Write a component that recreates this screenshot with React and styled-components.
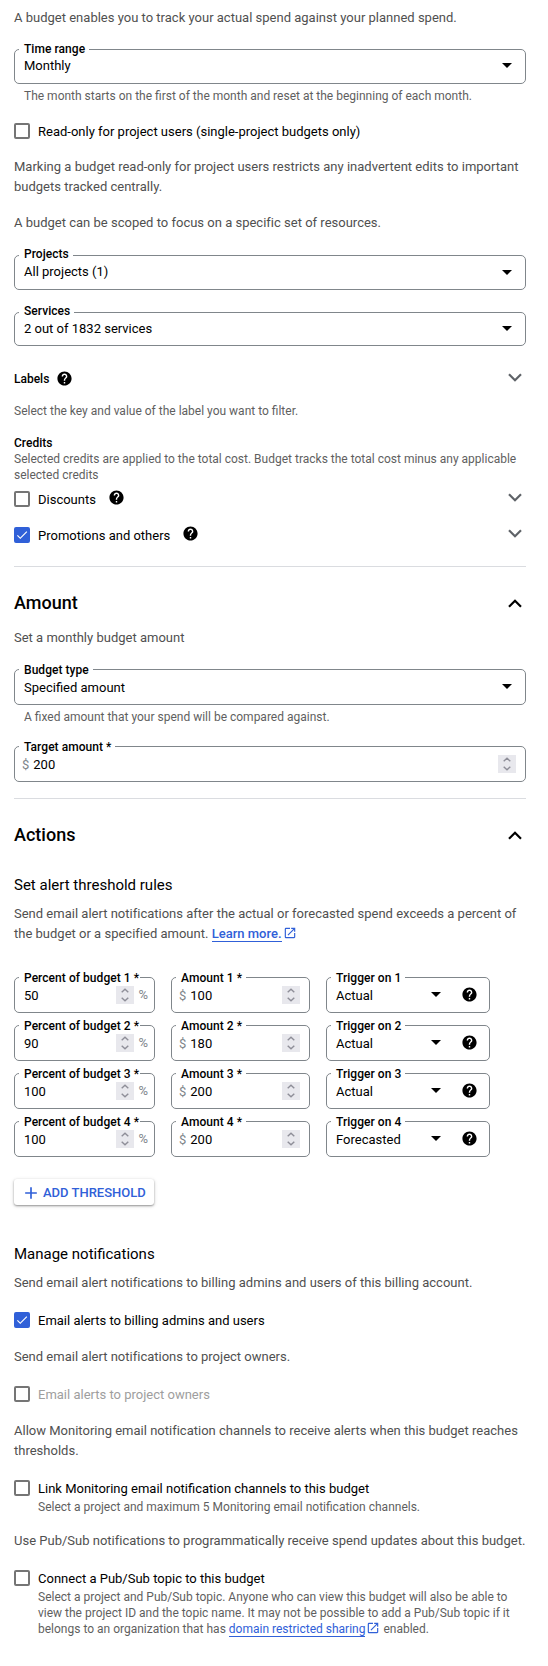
import React from "react";
import styled, { createGlobalStyle, css } from "styled-components";
import { MdHelp, MdOpenInNew, MdAdd, MdCheck } from "react-icons/md";

const GlobalStyle = createGlobalStyle`
  *, *::before, *::after { box-sizing: border-box; }
  body { margin: 0; background: #fff; }
`;

const Page = styled.main`
  width: 548px;
  padding: 7px 22px 28px 14px;
  display: flex;
  flex-direction: column;
  align-items: stretch;
  background: #fff;
  color: #000;
  font-family: Roboto, "Liberation Sans", sans-serif;
  font-size: 13px;
  line-height: 20px;
`;

const Paragraph = styled.p`
  margin: ${(p) => (p.$top || 0) + 1}px 0 -1px;
  color: #505050;
  letter-spacing: 0.005px;
  white-space: nowrap;
`;

const Hint = styled.p`
  margin: ${(p) => p.$top ?? 4}px 0 0 ${(p) => p.$indent || 0}px;
  color: #5f5f5f;
  font-size: 12px;
  line-height: 16px;
  white-space: nowrap;
`;

const SmallTitle = styled.h4`
  margin: ${(p) => p.$top || 0}px 0 0;
  font-size: 12px;
  line-height: 16px;
  font-weight: 500;
`;

const SubTitle = styled.h3`
  margin: ${(p) => p.$top}px 0 6px;
  font-size: 15px;
  line-height: 24px;
  font-weight: 400;
`;

const TitleRow = styled.div`
  display: flex;
  align-items: center;
  height: ${(p) => p.$height || 24}px;
  margin-top: ${(p) => p.$top}px;
  padding-right: 4px;
`;

const SectionTitle = styled.h2`
  margin: 0;
  font-size: 18px;
  line-height: 24px;
  font-weight: 500;
`;

const Divider = styled.hr`
  width: 100%;
  height: 1px;
  margin: ${(p) => p.$top}px 0 0;
  border: 0;
  background: #dadce0;
`;

const FieldBox = styled.div`
  position: relative;
  display: flex;
  align-items: flex-start;
  width: ${(p) => (p.$width ? `${p.$width}px` : "100%")};
  height: ${(p) => p.$height || 36}px;
  margin-top: ${(p) => p.$top || 0}px;
  padding: ${(p) => p.$drop || 7}px 9px 0 ${(p) => p.$inset || 9}px;
  border: 1px solid #80868b;
  border-radius: 5px;
`;

const FieldLabel = styled.label`
  position: absolute;
  left: 4px;
  top: ${(p) => p.$lift || -7}px;
  padding: 0 ${(p) => p.$gap ?? 4}px 0 5px;
  background: #fff;
  font-size: 12px;
  line-height: 14px;
  font-weight: 500;
  letter-spacing: 0.05px;
  white-space: nowrap;
`;

const Value = styled.span`
  flex: 1;
  padding-top: 1px;
  white-space: nowrap;
`;

const Affix = styled.span`
  color: #80868b;
  margin: ${(p) => p.$margin};
`;

const Caret = styled.span`
  margin: ${(p) => p.$down ?? 7}px ${(p) => p.$right ?? 4}px 0 0;
  border: 5px solid transparent;
  border-top-color: #000;
  border-bottom: 0;
`;

const SpinnerBox = styled.span`
  display: flex;
  align-items: center;
  justify-content: center;
  width: 18px;
  height: 18px;
  margin-top: 1px;
  background: #e8e8ed;
`;

const CheckRow = styled.div`
  display: flex;
  align-items: center;
  height: 16px;
  margin-top: ${(p) => p.$top}px;
  padding-right: 4px;
`;

const Box = styled.span`
  display: flex;
  align-items: center;
  justify-content: center;
  flex: none;
  width: 16px;
  height: 16px;
  margin-right: 8px;
  border: 2px solid #757575;
  border-radius: 2px;
  color: #fff;
  ${(p) =>
    p.$checked &&
    css`
      border-color: #3060d8;
      background: #3060d8;
    `}
`;

const Tick = styled(MdCheck)`
  flex: none;
  width: 14px;
  height: 14px;
`;

const CheckLabel = styled.span`
  margin-top: 2px;
  line-height: 16px;
  white-space: nowrap;
  color: ${(p) => (p.$disabled ? "#9e9e9e" : "#000")};
`;

const HelpIcon = styled(MdHelp)`
  flex: none;
  width: 17px;
  height: 17px;
  margin: ${(p) => p.$margin || 0};
`;

const ChevronSvg = styled.svg`
  flex: none;
  margin-left: auto;
  margin-top: ${(p) => p.$shift || 0}px;
`;

const Link = styled.a`
  color: #3060d8;
  border-bottom: 1px solid #3060d8;
  font-weight: ${(p) => (p.$strong ? 500 : 400)};
`;

const LinkIcon = styled(MdOpenInNew)`
  width: 14px;
  height: 14px;
  margin-left: 1px;
  color: #3060d8;
  vertical-align: -2px;
`;

const Rules = styled.div`
  display: flex;
  flex-direction: column;
  gap: 12px;
  margin-top: 34px;
`;

const Rule = styled.div`
  display: flex;
  gap: 16px;
`;

const AddButton = styled.button`
  display: flex;
  align-items: center;
  align-self: flex-start;
  width: 140px;
  height: 26px;
  margin-top: 22px;
  padding: 1px 0 0 7px;
  gap: 2px;
  border: 0;
  border-radius: 3px;
  background: #fff;
  color: #3060d8;
  box-shadow: 0 1px 2px rgba(0, 0, 0, 0.35), 0 1px 4px rgba(0, 0, 0, 0.15);
  font: 500 13px/24px Roboto, sans-serif;
  white-space: nowrap;
`;

function Chevron({ up, shift }) {
  return (
    <ChevronSvg width="14" height="9" viewBox="0 0 14 9" fill="none" stroke={up ? "#000" : "#5f6368"} strokeWidth="2.2" $shift={shift}>
      <path d={up ? "M1 7.8 7 1.8l6 6" : "M1 1.2l6 6 6-6"} />
    </ChevronSvg>
  );
}

function Spinner() {
  return (
    <SpinnerBox>
      <svg width="8" height="14" viewBox="0 0 8 14" fill="none" stroke="#8e8e98" strokeWidth="1.4">
        <path d="M.7 4.3 4 1.2l3.3 3.1M.7 9.7 4 12.8l3.3-3.1" />
      </svg>
    </SpinnerBox>
  );
}

function Check({ top, checked, disabled, label, children }) {
  return (
    <CheckRow $top={top}>
      <Box $checked={checked}>{checked && <Tick />}</Box>
      <CheckLabel $disabled={disabled}>{label}</CheckLabel>
      {children}
    </CheckRow>
  );
}

function Select({ label, value, lift, caretDown, ...box }) {
  return (
    <FieldBox {...box}>
      <FieldLabel $lift={lift}>{label}</FieldLabel>
      <Value>{value}</Value>
      <Caret $down={caretDown} />
    </FieldBox>
  );
}

const rules = [
  ["50", "100", "Actual"],
  ["90", "180", "Actual"],
  ["100", "200", "Actual"],
  ["100", "200", "Forecasted"],
];

export default function App() {
  return (
    <Page>
      <GlobalStyle />
      <Paragraph>A budget enables you to track your actual spend against your planned spend.</Paragraph>
      <Select label="Time range" value="Monthly" $top={22} $height={35} $drop={5} lift={-8} caretDown={8} />
      <Hint $indent={10}>The month starts on the first of the month and reset at the beginning of each month.</Hint>
      <Check top={19} label="Read-only for project users (single-project budgets only)" />
      <Paragraph $top={17}>
        Marking a budget read-only for project users restricts any inadvertent edits to important
        <br />
        budgets tracked centrally.
      </Paragraph>
      <Paragraph $top={16}>A budget can be scoped to focus on a specific set of resources.</Paragraph>
      <Select label="Projects" value="All projects (1)" $top={23} $height={35} $drop={5} lift={-9} caretDown={9} />
      <Select label="Services" value="2 out of 1832 services" $top={22} $height={34} $drop={5} lift={-9} caretDown={8} />

      <TitleRow $top={25} $height={16}>
        <SmallTitle>Labels</SmallTitle>
        <HelpIcon $margin="-2px 0 0 7px" />
        <Chevron shift={-3} />
      </TitleRow>
      <Hint $top={16}>Select the key and value of the label you want to filter.</Hint>
      <SmallTitle $top={16}>Credits</SmallTitle>
      <Hint $top={0}>
        Selected credits are applied to the total cost. Budget tracks the total cost minus any applicable
        <br />
        selected credits
      </Hint>
      <Check top={8} label="Discounts">
        <HelpIcon $margin="-4px 0 0 12px" />
        <Chevron shift={-3} />
      </Check>
      <Check top={20} checked label="Promotions and others">
        <HelpIcon $margin="-4px 0 0 12px" />
        <Chevron shift={-3} />
      </Check>

      <Divider $top={23} />
      <TitleRow $top={24}>
        <SectionTitle>Amount</SectionTitle>
        <Chevron up />
      </TitleRow>
      <Paragraph $top={12}>Set a monthly budget amount</Paragraph>
      <Select label="Budget type" value="Specified amount" $top={22} />
      <Hint $indent={10}>A fixed amount that your spend will be compared against.</Hint>
      <FieldBox $top={21} $inset={7}>
        <FieldLabel>Target amount *</FieldLabel>
        <Affix $margin="1px 4px 0 0">$</Affix>
        <Value>200</Value>
        <Spinner />
      </FieldBox>

      <Divider $top={16} />
      <TitleRow $top={24}>
        <SectionTitle>Actions</SectionTitle>
        <Chevron up />
      </TitleRow>
      <SubTitle $top={26}>Set alert threshold rules</SubTitle>
      <Paragraph>
        Send email alert notifications after the actual or forecasted spend exceeds a percent of
        <br />
        the budget or a specified amount. <Link $strong>Learn more.</Link>
        <LinkIcon />
      </Paragraph>
      <Rules>
        {rules.map(([percent, amount, trigger], i) => (
          <Rule key={i}>
            <FieldBox $width={141}>
              <FieldLabel $gap={1}>Percent of budget {i + 1} *</FieldLabel>
              <Value>{percent}</Value>
              <Spinner />
              <Affix $margin="0 -3px 0 4px">%</Affix>
            </FieldBox>
            <FieldBox $width={139} $inset={7}>
              <FieldLabel>Amount {i + 1} *</FieldLabel>
              <Affix $margin="1px 4px 0 0">$</Affix>
              <Value>{amount}</Value>
              <Spinner />
            </FieldBox>
            <FieldBox $width={164}>
              <FieldLabel>Trigger on {i + 1}</FieldLabel>
              <Value>{trigger}</Value>
              <Caret $right={20} />
              <HelpIcon $margin="1px 2px 0 0" />
            </FieldBox>
          </Rule>
        ))}
      </Rules>
      <AddButton>
        <MdAdd size={20} />
        ADD THRESHOLD
      </AddButton>

      <SubTitle $top={37}>Manage notifications</SubTitle>
      <Paragraph>Send email alert notifications to billing admins and users of this billing account.</Paragraph>
      <Check top={20} checked label="Email alerts to billing admins and users" />
      <Paragraph $top={18}>Send email alert notifications to project owners.</Paragraph>
      <Check top={20} disabled label="Email alerts to project owners" />
      <Paragraph $top={18}>
        Allow Monitoring email notification channels to receive alerts when this budget reaches
        <br />
        thresholds.
      </Paragraph>
      <Check top={20} label="Link Monitoring email notification channels to this budget" />
      <Hint $top={3} $indent={24}>Select a project and maximum 5 Monitoring email notification channels.</Hint>
      <Paragraph $top={15}>Use Pub/Sub notifications to programmatically receive spend updates about this budget.</Paragraph>
      <Check top={20} label="Connect a Pub/Sub topic to this budget" />
      <Hint $top={3} $indent={24}>
        Select a project and Pub/Sub topic. Anyone who can view this budget will also be able to
        <br />
        view the project ID and the topic name. It may not be possible to add a Pub/Sub topic if it
        <br />
        belongs to an organization that has <Link>domain restricted sharing</Link>
        <LinkIcon /> enabled.
      </Hint>
    </Page>
  );
}
